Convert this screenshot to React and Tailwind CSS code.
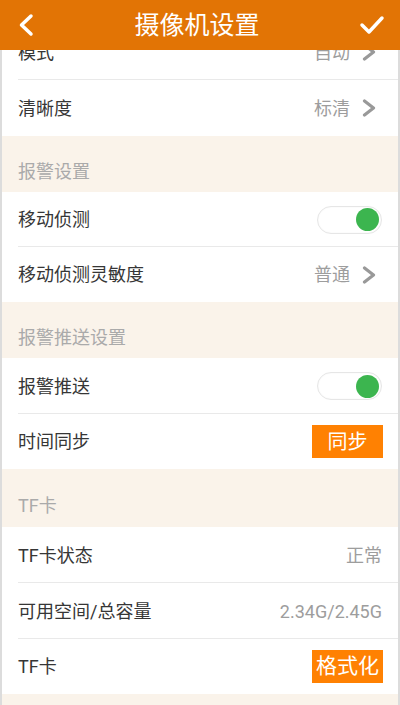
import React from "react";

const Chevron = () => (
  <svg width="14" height="18" viewBox="0 0 14 18" className="ml-[12px] mr-[6px] shrink-0">
    <polyline points="2.5,2 11.5,9 2.5,16" fill="none" stroke="#999999" strokeWidth="3.2" strokeLinecap="round" strokeLinejoin="round" />
  </svg>
);

const Toggle = () => (
  <div className="w-[65px] h-[28px] rounded-full bg-white border border-[#e6e6e6] flex items-center justify-end pr-[2px] shadow-[inset_0_0_2px_rgba(0,0,0,0.05)]">
    <div className="w-[23px] h-[23px] rounded-full bg-[#3cb54f]" />
  </div>
);

const Btn = ({ children }) => (
  <div className="w-[71px] h-[33px] bg-[#ff8102] text-white text-[20px] flex items-center justify-center leading-none -mr-[1px]">
    {children}
  </div>
);

const Row = ({ h, label, children, sep = true }) => (
  <div className={`relative bg-white flex items-center justify-between pl-[16px] pr-[16px] ${h}`}>
    <span className="text-[18px] text-[#363636]">{label}</span>
    <div className="flex items-center">{children}</div>
    {sep && <div className="absolute left-[16px] right-0 bottom-0 h-px bg-[#e9e9e9]" />}
  </div>
);

const Value = ({ children }) => <span className="text-[18px] text-[#9d9d9d]">{children}</span>;

const Section = ({ h, title }) => (
  <div className={`bg-[#faf3ea] flex items-center pl-[16px] pt-[14px] ${h}`}>
    <span className="text-[18px] text-[#aaaaaa]">{title}</span>
  </div>
);

export default function App() {
  return (
    <div className="w-[400px] h-[705px] overflow-hidden bg-white flex flex-col" style={{ fontFamily: 'Roboto, "Noto Sans CJK SC", sans-serif' }}>
      <div className="h-[50px] shrink-0 bg-[#e27405] flex items-center justify-between px-[18px] relative z-10">
        <svg width="18" height="24" viewBox="0 0 18 24" className="-ml-[1px]">
          <polyline points="14,3 4.5,12 14,21" fill="none" stroke="white" strokeWidth="3.5" strokeLinecap="round" strokeLinejoin="round" />
        </svg>
        <span className="text-[25px] text-white leading-none">摄像机设置</span>
        <svg width="26" height="20" viewBox="0 0 26 20" className="mr-[-3px]">
          <polyline points="3,10 10,17 23,3" fill="none" stroke="white" strokeWidth="3.5" strokeLinecap="round" strokeLinejoin="round" />
        </svg>
      </div>
      <div className="flex-1 overflow-hidden border-x-2 border-[#dcdcdc]">
        <div className="-mt-[26px] flex flex-col">
          <Row h="h-[56px]" label="模式">
            <Value>自动</Value>
            <Chevron />
          </Row>
          <Row h="h-[56px]" label="清晰度" sep={false}>
            <Value>标清</Value>
            <Chevron />
          </Row>
          <Section h="h-[56px]" title="报警设置" />
          <Row h="h-[55px]" label="移动侦测">
            <Toggle />
          </Row>
          <Row h="h-[55px]" label="移动侦测灵敏度" sep={false}>
            <Value>普通</Value>
            <Chevron />
          </Row>
          <Section h="h-[56px]" title="报警推送设置" />
          <Row h="h-[56px]" label="报警推送">
            <Toggle />
          </Row>
          <Row h="h-[55px]" label="时间同步" sep={false}>
            <Btn>同步</Btn>
          </Row>
          <Section h="h-[58px]" title="TF卡" />
          <Row h="h-[56px]" label="TF卡状态">
            <Value>正常</Value>
          </Row>
          <Row h="h-[56px]" label="可用空间/总容量">
            <Value>2.34G/2.45G</Value>
          </Row>
          <Row h="h-[55px]" label="TF卡" sep={false}>
            <Btn>
              <span className="text-[21px]">格式化</span>
            </Btn>
          </Row>
          <div className="h-[40px] bg-[#faf3ea]" />
        </div>
      </div>
    </div>
  );
}
